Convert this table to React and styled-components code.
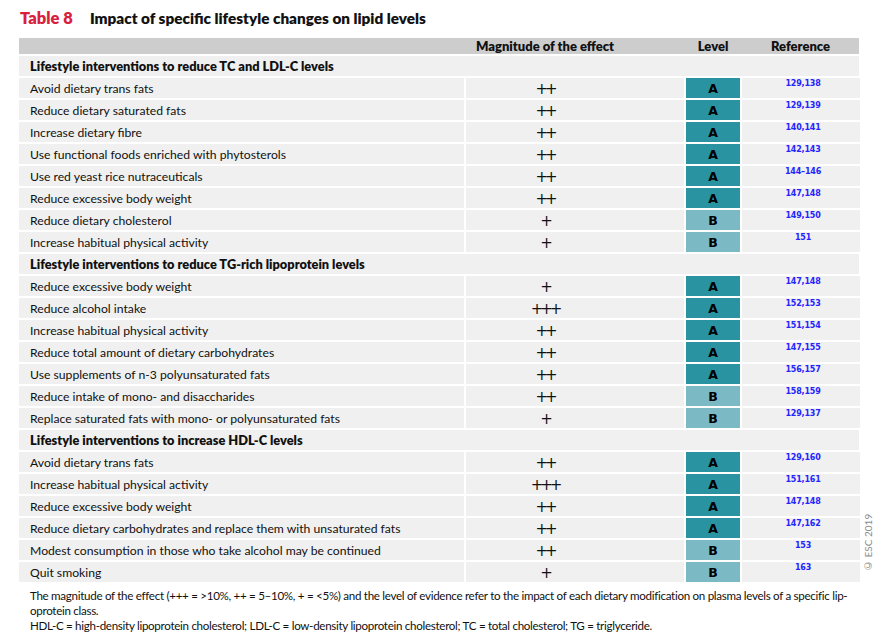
import React from "react";
import styled, { createGlobalStyle } from "styled-components";

const GlobalStyle = createGlobalStyle`
  body {
    margin: 0;
    background: #ffffff;
    font-family: "Lato", "Open Sans", sans-serif;
    color: #111111;
  }
`;

const sections = [
  {
    title: "Lifestyle interventions to reduce TC and LDL-C levels",
    rows: [
      ["Avoid dietary trans fats", "++", "A", "129,138"],
      ["Reduce dietary saturated fats", "++", "A", "129,139"],
      ["Increase dietary fibre", "++", "A", "140,141"],
      ["Use functional foods enriched with phytosterols", "++", "A", "142,143"],
      ["Use red yeast rice nutraceuticals", "++", "A", "144\u2013146"],
      ["Reduce excessive body weight", "++", "A", "147,148"],
      ["Reduce dietary cholesterol", "+", "B", "149,150"],
      ["Increase habitual physical activity", "+", "B", "151"],
    ],
  },
  {
    title: "Lifestyle interventions to reduce TG-rich lipoprotein levels",
    rows: [
      ["Reduce excessive body weight", "+", "A", "147,148"],
      ["Reduce alcohol intake", "+++", "A", "152,153"],
      ["Increase habitual physical activity", "++", "A", "151,154"],
      ["Reduce total amount of dietary carbohydrates", "++", "A", "147,155"],
      ["Use supplements of n-3 polyunsaturated fats", "++", "A", "156,157"],
      ["Reduce intake of mono- and disaccharides", "++", "B", "158,159"],
      ["Replace saturated fats with mono- or polyunsaturated fats", "+", "B", "129,137"],
    ],
  },
  {
    title: "Lifestyle interventions to increase HDL-C levels",
    rows: [
      ["Avoid dietary trans fats", "++", "A", "129,160"],
      ["Increase habitual physical activity", "+++", "A", "151,161"],
      ["Reduce excessive body weight", "++", "A", "147,148"],
      ["Reduce dietary carbohydrates and replace them with unsaturated fats", "++", "A", "147,162"],
      ["Modest consumption in those who take alcohol may be continued", "++", "B", "153"],
      ["Quit smoking", "+", "B", "163"],
    ],
  },
];

const Page = styled.div`
  padding: 8px 0 0 19px;
  width: 858px;
`;

const TitleRow = styled.div`
  display: flex;
  align-items: baseline;
  gap: 17px;
  height: 30px;
  padding-left: 1px;
`;

const TableLabel = styled.span`
  color: #d8213f;
  font-weight: 800;
  font-size: 16.5px;
`;

const TableTitle = styled.span`
  font-weight: 800;
  font-size: 15.3px;
  color: #111;
`;

const Wrap = styled.div`
  display: flex;
  align-items: flex-end;
`;

const Table = styled.div`
  width: 840px;
  display: flex;
  flex-direction: column;
  gap: 2px;
`;

const Row = styled.div`
  display: grid;
  grid-template-columns: 445px 218px 53px 119px;
  column-gap: 2px;
  height: ${(p) => (p.$head ? "16px" : "20px")};
  background: ${(p) => (p.$head ? "#cdcdcd" : p.$section ? "#f0f0f0" : "transparent")};
  & > div:nth-child(3) {
    margin-right: -1px;
  }
`;

const HeadCell = styled.div`
  font-weight: 800;
  font-size: 13px;
  display: flex;
  align-items: center;
  justify-content: center;
  padding-right: ${(p) => p.$pr || 0}px;
`;

const SectionTitle = styled.div`
  grid-column: 1 / -1;
  font-weight: 800;
  font-size: 12.8px;
  padding-left: 11px;
  display: flex;
  align-items: center;
`;

const Cell = styled.div`
  background: #f0f0f0;
  font-size: 12.2px;
  display: flex;
  align-items: center;
  padding-left: 11px;
`;

const Magnitude = styled.div`
  background: #f0f0f0;
  font-family: "DejaVu Sans", sans-serif;
  font-size: 15px;
  font-weight: 400;
  display: flex;
  align-items: center;
  justify-content: center;
  padding: 2px 60px 0 0;
  letter-spacing: -3px;
  color: #111;
`;

const Level = styled.div`
  background: ${(p) => (p.$grade === "A" ? "#2a93a2" : "#7bb9c5")};
  font-family: "DejaVu Sans", sans-serif;
  font-weight: 700;
  font-size: 12.5px;
  color: #000;
  display: flex;
  align-items: center;
  justify-content: center;
`;

const Ref = styled.div`
  background: #f0f0f0;
  margin-left: 1px;
  color: #2424ff;
  font-family: "DejaVu Sans", sans-serif;
  font-weight: 700;
  font-size: 8px;
  letter-spacing: -0.2px;
  text-align: center;
  padding: 1px 0 0 4px;
`;

const Side = styled.div`
  writing-mode: vertical-rl;
  transform: rotate(180deg);
  color: #8a8a8a;
  font-size: 10px;
  font-family: "Lato", sans-serif;
  padding: 0 0 0 2px;
  margin: 0 0 10px 3px;
  height: 60px;
`;

const Notes = styled.div`
  margin-top: 6px;
  padding-left: 11px;
  font-size: 11.6px;
  line-height: 15px;
  letter-spacing: -0.3px;
  color: #111;
`;

export default function App() {
  return (
    <>
      <GlobalStyle />
      <Page>
        <TitleRow>
          <TableLabel>Table 8</TableLabel>
          <TableTitle>Impact of specific lifestyle changes on lipid levels</TableTitle>
        </TitleRow>
        <Wrap>
          <Table>
            <Row $head>
              <div />
              <HeadCell $pr={60}>Magnitude of the effect</HeadCell>
              <HeadCell>Level</HeadCell>
              <HeadCell>Reference</HeadCell>
            </Row>
            {sections.map((s) => (
              <React.Fragment key={s.title}>
                <Row $section>
                  <SectionTitle>{s.title}</SectionTitle>
                </Row>
                {s.rows.map((r, i) => (
                  <Row key={s.title + i}>
                    <Cell>{r[0]}</Cell>
                    <Magnitude>{r[1]}</Magnitude>
                    <Level $grade={r[2]}>{r[2]}</Level>
                    <Ref>{r[3]}</Ref>
                  </Row>
                ))}
              </React.Fragment>
            ))}
          </Table>
          <Side>© ESC 2019</Side>
        </Wrap>
        <Notes>
          The magnitude of the effect (+++ = &gt;10%, ++ = 5–10%, + = &lt;5%) and the level of evidence refer to the impact of each dietary modification on plasma levels of a specific lip-
          <br />
          oprotein class.
          <br />
          HDL-C = high-density lipoprotein cholesterol; LDL-C = low-density lipoprotein cholesterol; TC = total cholesterol; TG = triglyceride.
        </Notes>
      </Page>
    </>
  );
}
